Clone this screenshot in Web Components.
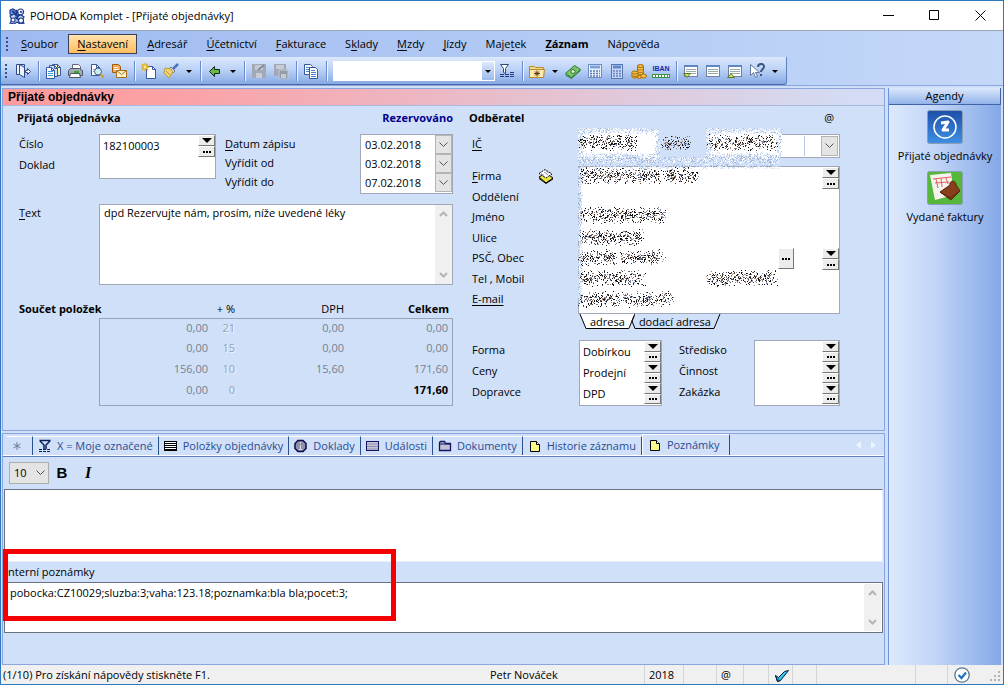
<!DOCTYPE html>
<html lang="cs">
<head>
<meta charset="utf-8">
<title>POHODA Komplet - [Přijaté objednávky]</title>
<style>
html,body{margin:0;height:100%}
body{font:11px/16px "Open Sans","Noto Sans",sans-serif;color:#000;overflow:hidden}
pohoda-window{height:100vh}
</style>
</head>
<body>
<pohoda-window></pohoda-window>
<script>
const BASE = `*{box-sizing:border-box}button,input,textarea,select{font:inherit;color:inherit;margin:0;padding:0;border:0;border-radius:0;background:none;min-width:0;outline:0}button{display:block}a{color:inherit;text-decoration:none}u{text-underline-offset:2px}h1,h2,p{margin:0;font:inherit}svg{display:block}`;
function define(name, html, setup){
  const t = document.createElement('template');
  t.innerHTML = html.replace('<style>', '<style>' + BASE);
  customElements.define(name, class extends HTMLElement{
    connectedCallback(){
      if(this.shadowRoot) return;
      this.attachShadow({mode:'open'}).append(t.content.cloneNode(true));
      if(setup) setup(this, this.shadowRoot);
    }
  });
}

const page = (x,y,f='#fff',s='#36589c') => `<path d="M${x} ${y}h5l3 3v8h-8z" fill="${f}" stroke="${s}"/><path d="M${x+5} ${y}v3h3" fill="none" stroke="${s}"/>`;
const listIcon = `<rect x="1.500" y="2.500" width="13" height="11" fill="#fff" stroke="#6f7f9c"/><path d="M1 3h14" stroke="#5f86c4" stroke-width="2"/><path d="M3 6.500h10M3 8.500h10M3 10.500h10" stroke="#9aa"/>`;
const ICONS = {
  logo:`<g fill="#fff" stroke="#1d3c8f" stroke-width="1.200"><path d="M1 2l3-1 3 2 1 3-3 2-4-2z" fill="#7f9be0"/><circle cx="11.500" cy="4" r="3"/><path d="M1 8l4-2 3 2 4-1 3 2-2 3 2 3-4 1-3-2-3 2-4-1 2-3z" fill="#c3d2f6"/><circle cx="12" cy="12.500" r="2.500"/><circle cx="4" cy="12" r="2"/></g><path d="M3 3l5 4M6 9l4 3M10 6l-2 4M11 3.500l2 1M7 2l2 3" stroke="#1d3c8f" stroke-width="1.800"/>`,
  exit:`<path d="M1.500 1.500h3v10h-3zM4.500 1.500l5 3v10l-5-3z" fill="#eef3fd" stroke="#2d4a86"/><path d="M4.500 1.500h5v3" stroke="#2d4a86" fill="none"/><path d="M10.500 7.500h2v-2l3 3-3 3v-2h-2z" fill="#fff" stroke="#2d4a86"/>`,
  pages:page(7.500,1.500,'#fff6a8')+page(4.500,2.500,'#cfe0ff')+page(1.500,4.500)+`<path d="M3 8.500h5M3 10.500h5M3 12.500h5" stroke="#3f9ad0"/>`,
  print:`<path d="M5.500 7V1.500h6l2 2V7z" fill="#fff" stroke="#667"/><path d="M1.500 7.500l2-2h9l3 2v5h-14z" fill="#a4abb5" stroke="#4e5764"/><path d="M3.500 10.500h9l1 4h-11z" fill="#fff" stroke="#4e5764"/><path d="M7 9h5" stroke="#38a53a" stroke-width="2"/>`,
  preview:page(2.500,1.500)+`<path d="M4 6.500h4M4 8.500h3" stroke="#9ab"/><circle cx="9" cy="8.500" r="3.500" fill="#cdeaf7" stroke="#44618c"/><path d="M11.500 11l3 3.500" stroke="#d29a2a" stroke-width="2"/>`,
  mail:`<path d="M1.500 1.500h6l2 2v6h-8z" fill="#f5a94e" stroke="#a05a10"/><path d="M3 4.500h4M3 6.500h5" stroke="#fff"/><path d="M5.500 7.500h10v7h-10z" fill="#fff3cc" stroke="#a8701c"/><path d="M5.500 7.500l5 4 5-4" fill="none" stroke="#a8701c"/>`,
  new:`<path d="M5.500 3.500h6l3 3v9h-9z" fill="#fff" stroke="#36589c"/><path d="M11.500 3.500v3h3" fill="none" stroke="#36589c"/><path d="M4 0v8M0 4h8M1 1l6 6M7 1l-6 6" stroke="#e9a90c" stroke-width="1.300"/><circle cx="4" cy="4" r="1.500" fill="#fff2a0"/>`,
  brush:`<path d="M15 1l-5 5" stroke="#4a74c0" stroke-width="2.500"/><path d="M8 4l4 4-2 2-4-4z" fill="#dfe3ea" stroke="#778"/><path d="M2 5l6 1 2 3-4 6-5-5z" fill="#f1d070" stroke="#b59a40"/><path d="M3 8l4 4" stroke="#b59a40"/>`,
  back:`<path d="M2.500 8.500l5-5v3h5v4h-5v3z" fill="#68b848" stroke="#102a10"/>`,
  save:`<path d="M1 1h14v14H1z" fill="#a2a8b4"/><path d="M4 2h8v5H4zM5 10h6v5H5z" fill="#c6ccd5"/><path d="M7 7l6-5" stroke="#868d9a" stroke-width="2"/>`,
  saveAll:`<path d="M1 1h12v12H1z" fill="#a2a8b4"/><path d="M3 2h8v4H3z" fill="#c6ccd5"/><path d="M6 7h9v9H6z" fill="#959ba8" stroke="#c6ccd5"/><path d="M8 11h5v4H8z" fill="#c6ccd5"/>`,
  copy:`<path d="M1.500 1.500h6l2 2v8h-8z" fill="#fff" stroke="#36589c"/><path d="M3 4.500h4M3 6.500h5M3 8.500h5" stroke="#4a83c8"/><path d="M6.500 4.500h6l2 2v9h-8z" fill="#fff" stroke="#36589c"/><path d="M8 7.500h4M8 9.500h5M8 11.500h5M8 13.500h5" stroke="#4a83c8"/>`,
  filter:`<path d="M1.500 1.500h8l-3 4v5l-2-1v-4z" fill="#fff" stroke="#2c4a7c"/><path d="M1 11.500h4M6 11.500h4M11 11.500h4M1 13.500h4M6 13.500h4M11 13.500h4M11 9.500h4" stroke="#1e3d80"/>`,
  folder:`<path d="M.5 3.500h5l1 1h8v10h-14z" fill="#f7dc8c" stroke="#b8862c"/><path d="M.5 6.500h15l-1 8h-14z" fill="#ffeaad" stroke="#b8862c"/><path d="M8 7.500v6M5 10.500h6M6 8.500l4 4M10 8.500l-4 4" stroke="#5b3410"/>`,
  money:`<path d="M.5 10.500l9-8 6 4-9 8z" fill="#7cc46c" stroke="#2b7a2b"/><path d="M.5 12l6 3.500 9-8" fill="none" stroke="#2b7a2b"/><circle cx="8" cy="8.500" r="2" fill="#e5f6dc" stroke="#2b7a2b"/>`,
  calcWide:`<rect x="1.500" y="1.500" width="13" height="13" fill="#eaf1fd" stroke="#6d8cc2"/><path d="M3 4h10" stroke="#7fa2dc" stroke-width="3"/><path d="M3 8h10M3 10.500h10M3 13h10" stroke="#5878b4" stroke-width="1.500" stroke-dasharray="2 1"/>`,
  calc:`<rect x="2.500" y="1.500" width="11" height="14" fill="#c4d7f6" stroke="#5675ad"/><path d="M4 4h8" stroke="#5f86c8" stroke-width="3"/><path d="M4 8h8M4 10.500h8M4 13h8" stroke="#6483bb" stroke-width="1.500" stroke-dasharray="2 1"/>`,
  coins:`<g fill="#f6c044" stroke="#a86b08"><path d="M6.500 3v7c0 2 6 2 6 0V3z"/><ellipse cx="9.500" cy="3" rx="3" ry="1.500"/><path d="M6.500 5.500c0 2 6 2 6 0M6.500 8c0 2 6 2 6 0"/><path d="M1 9.500v4c0 2 6 2 6 0v-4z"/><ellipse cx="4" cy="9.500" rx="3" ry="1.500"/><path d="M1 12c0 2 6 2 6 0"/><ellipse cx="12.500" cy="13" rx="3" ry="2"/><ellipse cx="8.500" cy="14" rx="2" ry="1.500"/></g>`,
  listDown:listIcon+`<path d="M.5 10.500h7l-3.500 4z" fill="#c9e06a" stroke="#5b7a20"/>`,
  list:listIcon,
  listUp:listIcon+`<path d="M.5 14.500h7l-3.500-4z" fill="#c9e06a" stroke="#5b7a20"/>`,
  help:`<path d="M1.500 1.500v11l3-3 2 5 2-1-2-4h4z" fill="#fff" stroke="#667a9c"/><path d="M9 4c0-4 6-4 6-.5 0 3-3 2.500-3 5.500M12 11v2" fill="none" stroke="#34577e" stroke-width="2"/>`,
  cards:`<path d="M1 9l7-4 7 5-7 5z" fill="#e9e43a" stroke="#000"/><path d="M1 10.500l7 5 7-4.500" fill="none" stroke="#000"/><path d="M1 5.500l6-4 7 4.500-6 4z" fill="#fff" stroke="#000" stroke-dasharray="2 1"/><path d="M3 5.500l3 2M6 4l4 3M8 3l3 2" stroke="#88a"/>`,
  star:`<path d="M8 4v8M4.500 6l7 4M11.500 6l-7 4" stroke="#6e7c98"/>`,
  tabFilter:`<path d="M2.500 2.500h11M3 3l4 4v4M13 3L9 7v4" fill="none" stroke="#0b1f5c" stroke-width="1.500"/><path d="M2 11.500h12M2 13.500h12" stroke="#0b1f5c" stroke-dasharray="3 1"/>`,
  rows:`<rect x="1.500" y="3.500" width="12" height="9" fill="#fff" stroke="#000"/><path d="M2 5.500h12M2 7.500h12M2 9.500h12M2 11.500h12" stroke="#000"/>`,
  info:`<path d="M5 2.500h5l3 3v5l-3 3H5l-3-3v-5z" fill="#8e91a8" stroke="#0a0a50" stroke-width="1.500"/><path d="M7.500 4v1.500M7.500 7v5M6 11.500h3" stroke="#dde"/>`,
  events:`<rect x="1.500" y="3.500" width="12" height="9" fill="#c8c8d8" stroke="#141460"/><path d="M2 6h11M2 8.500h11M2 11h11" stroke="#8c8cac"/>`,
  docs:`<path d="M2.500 12.500v-8l1-1h4l1 2h5v7z" fill="#c0c0d4" stroke="#141460" stroke-width="1.300"/><path d="M3 6h10" stroke="#141460"/>`,
  note:`<path d="M3.500 3.500h6l3 3v7h-9z" fill="#fdf98a" stroke="#000"/><path d="M9.500 3.500v3h3" fill="#fff" stroke="#000"/>`,
  sync:`<path d="M2.500 8.500l3 2 6-6 4-1-8 10-3 1z" fill="#36c4ea" stroke="#00203c"/><path d="M2.500 8.500l2 6 3-1" fill="#1884b8" stroke="#00203c"/>`,
  ok:`<circle cx="8" cy="8" r="7.200" fill="#fff" stroke="#5b7690" stroke-width="1.300"/><path d="M4.500 8l3 3 4.500-5.500" fill="none" stroke="#1e6fc4" stroke-width="2.200"/>`
};
define('px-icon','<style>:host{display:block;width:16px;height:16px;flex:none}svg{width:100%;height:100%}</style><svg viewBox="0 0 16 16" aria-hidden="true"></svg>',
  (h,r)=>{r.querySelector('svg').innerHTML = ICONS[h.getAttribute('name')] || '';});

define('title-bar',`<style>
:host{display:flex;align-items:center;height:30px;padding-left:8px;background:#fff;border-bottom:1px solid #9aa6b4}
h1{flex:1;margin-left:5px}
button{width:46px;height:30px;display:grid;place-items:center}
</style><px-icon name="logo"></px-icon><h1><slot></slot></h1>
<button aria-label="Minimalizovat"><svg width="11" height="11"><path d="M0 5.500h11" stroke="#000"/></svg></button>
<button aria-label="Maximalizovat"><svg width="11" height="11"><path d="M.5 .5h9v9h-9z" fill="none" stroke="#000"/></svg></button>
<button aria-label="Zavřít"><svg width="11" height="11"><path d="M.5 .5l10 10M10.500 .5l-10 10" stroke="#000"/></svg></button>`);

define('menu-bar',`<style>
:host{display:flex;align-items:center;height:26px;padding-left:5px}
nav{display:flex;gap:1px}
i{width:2px;height:15px;margin-right:4px;background:repeating-linear-gradient(#33518f 0 2px,transparent 2px 4px)}
a{height:20px;line-height:18px;padding:0 8px;border:1px solid transparent}
a.on{border-color:#3a3f58;background:linear-gradient(#ffe3ae,#ffbe5e)}
b{font-weight:700}
</style><i></i><nav><a href="#"><u>S</u>oubor</a><a href="#" class="on"><u>N</u>astavení</a><a href="#"><u>A</u>dresář</a><a href="#"><u>Ú</u>četnictví</a><a href="#"><u>F</u>akturace</a><a href="#">S<u>k</u>lady</a><a href="#"><u>M</u>zdy</a><a href="#"><u>J</u>ízdy</a><a href="#">Maje<u>t</u>ek</a><a href="#"><b><u>Z</u>áznam</b></a><a href="#">Náp<u>o</u>věda</a></nav>`);

define('tool-bar',`<style>
:host{display:flex;width:fit-content;align-items:center;height:28px;padding:1px 4px 0;background:linear-gradient(#dce8fc,#bdd3f7 45%,#86a9e4);border-bottom:1px solid #4868a8;border-right:1px solid #5d80c0;border-radius:0 0 3px 0}
.grip{width:2px;height:15px;margin-right:5px;background:repeating-linear-gradient(#33518f 0 2px,transparent 2px 4px)}
button{width:22px;height:22px;display:grid;place-items:center}
button.m{width:14px}
.m::before,.drop::before{content:"";border:3px solid transparent;border-top-color:#000;border-bottom:0}
hr{width:1px;height:20px;margin:0 3px 0 4px;border:0;background:#6a8ccb;box-shadow:1px 0 #eef4ff}
.combo{display:flex;height:20px;width:162px;background:#fff;margin-left:3px;margin-right:1px}
.combo input{flex:1;padding:0 3px}
.combo button{width:14px;height:20px;background:linear-gradient(#dce8fc,#9ebbec);border:1px solid #fff}
.iban{font:bold 7px/8px "Liberation Sans",sans-serif;color:#1a28b0}
.iban span{display:block;height:4px;margin-top:1px;border:1px solid #3d9440;background:repeating-linear-gradient(90deg,#fff 0 2px,#3d9440 2px 3px)}
</style><span class="grip"></span>
<button aria-label="Konec"><px-icon name="exit"></px-icon></button><hr>
<button aria-label="Agendy"><px-icon name="pages"></px-icon></button><button aria-label="Tisk"><px-icon name="print"></px-icon></button><button aria-label="Náhled"><px-icon name="preview"></px-icon></button><button aria-label="Odeslat"><px-icon name="mail"></px-icon></button><hr>
<button aria-label="Nový"><px-icon name="new"></px-icon></button><button aria-label="Formát"><px-icon name="brush"></px-icon></button><button class="m" aria-label="Více"></button><hr>
<button aria-label="Zpět"><px-icon name="back"></px-icon></button><button class="m" aria-label="Více"></button><hr>
<button aria-label="Uložit" disabled><px-icon name="save"></px-icon></button><button aria-label="Uložit vše" disabled><px-icon name="saveAll"></px-icon></button><hr>
<button aria-label="Kopírovat"><px-icon name="copy"></px-icon></button><hr>
<div class="combo"><input aria-label="Hledat"><button class="drop" aria-label="Rozbalit"></button></div>
<button aria-label="Filtr"><px-icon name="filter"></px-icon></button><hr>
<button aria-label="Oblíbené"><px-icon name="folder"></px-icon></button><button class="m" aria-label="Více"></button>
<button aria-label="Platby"><px-icon name="money"></px-icon></button><button aria-label="Kalkulátor"><px-icon name="calcWide"></px-icon></button><button aria-label="Kalkulačka"><px-icon name="calc"></px-icon></button><button aria-label="Měny"><px-icon name="coins"></px-icon></button><button class="iban"><div>IBAN<span></span></div></button><hr>
<button aria-label="Seznam dole"><px-icon name="listDown"></px-icon></button><button aria-label="Seznam"><px-icon name="list"></px-icon></button><button aria-label="Seznam nahoře"><px-icon name="listUp"></px-icon></button><button aria-label="Nápověda"><px-icon name="help"></px-icon></button><button class="m" aria-label="Více"></button>`);

define('pick-buttons',`<style>
:host{display:flex;flex-direction:column;width:17px;flex:none}
button{flex:1;display:grid;place-items:center;background:#ececec;border:1px solid;border-color:#fff #777 #777 #fff}
</style><button aria-label="Rozbalit"><svg width="10" height="5"><path d="M0 0h10l-5 5z"/></svg></button><button aria-label="Vybrat"><svg width="8" height="2"><path d="M0 0h2v2h-2zM3 0h2v2h-2zM6 0h2v2h-2z"/></svg></button>`);

define('scroll-strip',`<style>
:host{display:flex;flex-direction:column;justify-content:space-between;align-items:center;width:17px;padding:6px 0;background:#f0f0f0;flex:none;box-sizing:border-box}
svg{fill:none;stroke:#b4b4b4;stroke-width:2}
</style><svg width="9" height="6"><path d="M1 5l3.500-3.500L8 5"/></svg><svg width="9" height="6"><path d="M1 1l3.500 3.500L8 1"/></svg>`);

/* Speckled cover over the customer's personal data */
define('redaction-layer',`<style>:host{display:block;pointer-events:none}svg{overflow:visible}</style><svg width="1" height="1" shape-rendering="crispEdges" aria-hidden="true"></svg>`,(h,r)=>{
  let s = 9127;
  const rnd = () => {s = (s + 0x6D2B79F5) | 0; let t = Math.imul(s ^ s >>> 15, 1 | s); t = t + Math.imul(t ^ t >>> 7, 61 | t) ^ t; return ((t ^ t >>> 14) >>> 0) / 4294967296};
  const groups = [];
  const fill = (x0,y0,w,hh,c,f) => {const d=[];for(let y=0;y<hh;y++)for(let x=0;x<w;x++)if(rnd()<f(x,y))d.push(`M${x0+x} ${y0+y}h1v1h-1z`);groups.push(`<path fill="${c}" d="${d.join('')}"/>`)};
  const blob = (x,y,w,hh) => {
    fill(x,y,w,hh,'#ffffff',(a,b)=>{const e=Math.min(a,b,w-1-a,hh-1-b);return e>6?1:.25+e*.11});
    fill(x,y,w,hh,'#a9bbd8',(a,b)=>Math.min(a,b,w-1-a,hh-1-b)<5?.12:0)};
  fill(127,5,76,30,'#d0e0f8',()=>1);
  blob(0,2,82,31); blob(128,2,76,31);
  fill(0,32,202,7,'#ffffff',()=>.25);
  fill(0,31,202,9,'#a9bbd8',()=>.2);
  fill(0,37,202,6,'#d0e0f8',(x,y)=>.7-y*.1);
  fill(0,40,5,136,'#d0e0f8',(x)=>.75-x*.14);
  fill(0,40,4,136,'#a9bbd8',()=>.15);
  const word = (x,y,w) => ['#111111','#4a4646','#7d8aa6','#a08070'].forEach((c,i)=>fill(x-3,y-9,w+6,19,c,(a,b)=>{
    const d=Math.min(1,Math.abs(b-9)/9), e=Math.min(1,(a+1)/6,(w+6-a)/6), g=Math.sin((x+a)*1.3+b)>-.3?1:.45; return (i?.08:.17)*Math.pow(1-d,1.1)*e*g*1.9}));
  [[3,16,53],[86,17,24],[132,16,66],[3,49,80],[88,49,30],[3,89,38],[42,89,44],[3,111,60],[3,131,34],[43,131,42],[3,152,62],[131,152,66],[3,173,38],[46,173,48]].forEach(a=>word(...a));
  r.querySelector('svg').innerHTML = groups.join('');
});

define('order-form',`<style>
:host{display:block;border:1px solid #8ba6de;background:#d0e0f8}
header{height:17px;line-height:16px;padding-left:5px;font-weight:700;background:linear-gradient(90deg,#ff9a9c,#fba2a6 20%,#d3dcf4 96%);border-bottom:1px solid #aab8e0;font-family:"Liberation Sans",sans-serif;font-size:12px}
.cols{display:grid;grid-template-columns:minmax(0,436fr) minmax(0,371fr);gap:16px;padding:3px 44px 24px 14px}
.head{display:flex;justify-content:space-between;height:18px;line-height:18px;margin-bottom:7px}
h2{font-weight:700}
.state{font-weight:700;color:#00008c}
.box{background:#fff;border:1px solid #a0a8b8}
.top{display:grid;grid-template-columns:80px 117px 1fr 93px;align-items:start;padding-left:2px}
.top label{display:block;line-height:19px;height:21px}
.top .dates label{height:19px;line-height:19px}
.dates{padding-left:9px}
.num{height:45px;display:flex;justify-content:space-between}
.num div{flex:1}
.num input{display:block;width:100%;height:20px;padding-left:3px}
.num pick-buttons{height:22px}
.d{display:flex;height:19px}
.db{height:60px}
.d input{flex:1;padding-left:4px;height:18px}
.dd{width:17px;background:#e4e4e4;border:1px solid #b4b4b4;display:grid;place-items:center;flex:none}
.dd svg{fill:none;stroke:#555}
.text{display:grid;grid-template-columns:80px 1fr;padding-left:2px;margin-top:10px}
.text label{line-height:18px}
.text .box{height:81px;display:flex}
textarea{flex:1;resize:none;padding:0 4px;line-height:16px;display:block;overflow:hidden}
table{width:100%;border-spacing:0;margin-top:14px;table-layout:fixed}
th{padding:0;height:19px;text-align:right;font-weight:400}
th.l{text-align:left;padding-left:2px}
.b{font-weight:700;color:#000}
td{padding:0;height:21px;line-height:18px;vertical-align:top;text-align:right;color:#75808f}
td.p{color:#94a1b5;text-shadow:1px 1px #eef4ff}
td:nth-child(2){border-left:1px solid #98a4bb}
td:last-child,th:last-child{padding-right:4px}
td:last-child{border-right:1px solid #98a4bb}
tbody tr:first-child td:not(:first-child){border-top:1px solid #98a4bb}
tbody tr:last-child td{height:25px}
tbody tr:last-child td:not(:first-child){border-bottom:1px solid #98a4bb}
.party{position:relative;display:grid;grid-template-columns:106px minmax(0,1fr);padding-left:3px}
.ic{height:24px;display:flex}
.ic>input{width:128px;flex:none}
.ic .box{flex:1;min-width:0;display:flex;padding:1px}
.ic .box input{flex:1}
.ic .box input+input{flex:none;width:17px;border-left:1px solid #b8c8e4}
.names{margin-top:8px;height:148px;display:grid;grid-template-rows:repeat(7,1fr);padding-bottom:4px;position:relative}
.names label{line-height:20px;height:20px}
.names px-icon{position:absolute;left:66px;top:2px}
.ic0{line-height:20px}
.addr{margin-top:8px;height:148px;display:grid;grid-template-rows:repeat(7,1fr);padding:0 0 3px}
.addr div{display:flex;justify-content:flex-end}
.addr input{flex:1;padding-left:4px}
.addr pick-buttons{height:22px}
.dots{width:16px;height:21px;background:#ececec;border:1px solid;border-color:#fff #777 #777 #fff;margin-right:28px;display:grid;place-items:center}
redaction-layer{position:absolute;left:109px;top:-8px}
.at{display:flex;height:15px;margin-left:109px}
.at button{position:relative;height:15px;line-height:14px;padding:0 10px 0 12px}
.at button+button{margin-left:-6px;padding:0 10px}
.at svg{position:absolute;inset:0;width:100%;height:15px}
.at span{position:relative}
.sel{display:grid;grid-template-columns:107px 83px 1fr 86px;padding-left:3px;margin-top:11px}
.sel label{display:block;height:21px;line-height:20px}
.sel .c{padding-left:17px}
.sel .box{height:66px}
.sel .box div{display:flex;height:21px}
.sel .box input{flex:1;padding-left:3px}
</style>
<header><slot></slot></header>
<div class="cols"><section>
<div class="head"><h2>Přijatá objednávka</h2><span class="state">Rezervováno</span></div>
<div class="top"><div><label for="n">Číslo</label><label for="dk">Doklad</label></div>
<div class="box num"><div><input id="n" value="182100003"><input id="dk"></div><pick-buttons></pick-buttons></div>
<div class="dates"><label for="d1"><u>D</u>atum zápisu</label><label for="d2">Vyřídit od</label><label for="d3">Vyřídit do</label></div>
<div class="box db"><div class="d"><input id="d1" value="03.02.2018"><button class="dd" aria-label="Kalendář"><svg width="9" height="6"><path d="M.5 .5l4 4 4-4"/></svg></button></div><div class="d"><input id="d2" value="03.02.2018"><button class="dd" aria-label="Kalendář"><svg width="9" height="6"><path d="M.5 .5l4 4 4-4"/></svg></button></div><div class="d"><input id="d3" value="07.02.2018"><button class="dd" aria-label="Kalendář"><svg width="9" height="6"><path d="M.5 .5l4 4 4-4"/></svg></button></div></div></div>
<div class="text"><label for="t"><u>T</u>ext</label><div class="box"><textarea id="t">dpd Rezervujte nám, prosím, níže uvedené léky</textarea><scroll-strip></scroll-strip></div></div>
<table><colgroup><col style="width:82px"><col><col style="width:27px"><col><col></colgroup>
<thead><tr><th class="l b" colspan="2">Součet položek</th><th>+ %</th><th>DPH</th><th class="b">Celkem</th></tr></thead>
<tbody><tr><td></td><td>0,00</td><td class="p">21</td><td>0,00</td><td>0,00</td></tr><tr><td></td><td>0,00</td><td class="p">15</td><td>0,00</td><td>0,00</td></tr><tr><td></td><td>156,00</td><td class="p">10</td><td>15,60</td><td>171,60</td></tr><tr><td></td><td>0,00</td><td class="p">0</td><td></td><td class="b">171,60</td></tr></tbody></table>
</section><section>
<div class="head"><h2>Odběratel</h2><a href="#" style="margin-right:6px">@</a></div>
<div class="party"><label class="ic0" for="ic"><u>IČ</u></label>
<div class="ic"><input id="ic"><div class="box"><input aria-label="DIČ"><input aria-label="Kód"><button class="dd" aria-label="Rozbalit"><svg width="9" height="6"><path d="M.5 .5l4 4 4-4"/></svg></button></div></div>
<div class="names"><label for="a1"><u>F</u>irma</label><label for="a2">Oddělení</label><label for="a3">Jméno</label><label for="a4">Ulice</label><label for="a5">PSČ, Obec</label><label for="a6">Tel , Mobil</label><label for="a7"><u>E-mail</u></label><px-icon name="cards"></px-icon></div>
<div class="box addr"><div><input id="a1"><pick-buttons></pick-buttons></div><div><input id="a2"></div><div><input id="a3"></div><div><input id="a4"></div><div><input id="a5"><button class="dots" aria-label="Vybrat"><svg width="8" height="2"><path d="M0 0h2v2h-2zM3 0h2v2h-2zM6 0h2v2h-2z"/></svg></button><pick-buttons></pick-buttons></div><div><input id="a6"></div><div><input id="a7"></div></div>
<redaction-layer></redaction-layer></div>
<div class="at"><button><svg viewBox="0 0 57 15" preserveAspectRatio="none"><path d="M2 0l6 14.500h43l6-14.500" fill="#fff" stroke="#000"/></svg><span>adresa</span></button><button><svg viewBox="0 0 92 15" preserveAspectRatio="none"><path d="M5 2l-2 5 3 7.500h79l6-14.500" fill="none" stroke="#000"/></svg><span>dodací adresa</span></button></div>
<div class="sel"><div><label for="s1">Forma</label><label for="s2">Ceny</label><label for="s3">Dopravce</label></div>
<div class="box"><div><input id="s1" value="Dobírkou"><pick-buttons></pick-buttons></div><div><input id="s2" value="Prodejní"><pick-buttons></pick-buttons></div><div><input id="s3" value="DPD"><pick-buttons></pick-buttons></div></div>
<div class="c"><label for="s4">Středisko</label><label for="s5">Činnost</label><label for="s6">Zakázka</label></div>
<div class="box"><div><input id="s4"><pick-buttons></pick-buttons></div><div><input id="s5"><pick-buttons></pick-buttons></div><div><input id="s6"><pick-buttons></pick-buttons></div></div></div>
</section></div>`);

define('record-tab',`<style>
:host{display:block}
button{display:flex;align-items:center;gap:4px;height:19px;padding:0 5px 0 4px;border-top:1px solid #fff;border-right:1px solid #29508f;color:#2a4c92;white-space:nowrap}
:host([icon="star"]) button{gap:0;padding:0 7px 0 2px}
:host([active]) button{height:21px;padding:0 9px 0 4px;background:#d0e0f8;border-left:1px solid #fff}
</style><button><px-icon></px-icon><span><slot></slot></span></button>`,
(h,r)=>{const i=r.querySelector('px-icon');const n=document.createElement('px-icon');n.setAttribute('name',h.getAttribute('icon'));i.replaceWith(n);});

define('notes-panel',`<style>
:host{display:flex;flex-direction:column;border:1px solid #8ba6de;background:#d0e0f8;position:relative}
.tabs{display:flex;align-items:flex-end;height:23px;padding:0 8px 1px 4px;border-bottom:1px solid #5f7fc4;box-shadow:inset 0 -1px #fff}
.nav{margin-left:auto;display:flex;gap:10px;align-self:center}
.bar{display:flex;align-items:center;height:32px;padding-left:6px}
.size{position:relative;width:40px;height:22px}
select{appearance:none;width:100%;height:100%;background:#e4e4e4;border:1px solid #adadad;padding-left:4px}
.size svg{position:absolute;right:4px;top:8px;fill:none;stroke:#555;pointer-events:none}
.bar button{width:26px;font:bold 15px/22px "Liberation Sans",sans-serif}
.bar button+button{font:italic bold 16px/22px "Liberation Serif",serif}
.area{display:flex;background:#fff;border:1px solid #6a7282;margin:0 1px}
.a1{flex:1;border-color:#6a7282 #e8eef8 #e8eef8 #6a7282}
.a2{height:51px;margin-bottom:31px;padding:1px}
textarea{flex:1;resize:none;line-height:18px;padding:0 4px}
label{height:20px;line-height:20px;padding-left:2px}
.mark{position:absolute;left:0;bottom:43px;width:393px;height:72px;border:5px solid #f40000;pointer-events:none}
</style>
<div class="tabs"><record-tab icon="star"></record-tab><record-tab icon="tabFilter">X = Moje označené</record-tab><record-tab icon="rows">Položky objednávky</record-tab><record-tab icon="info">Doklady</record-tab><record-tab icon="events">Události</record-tab><record-tab icon="docs">Dokumenty</record-tab><record-tab icon="note">Historie záznamu</record-tab><record-tab icon="note" active>Poznámky</record-tab>
<div class="nav"><svg width="5" height="8"><path d="M5 0v8L0 4z" fill="#eef4ff"/></svg><svg width="5" height="8"><path d="M0 0v8l5-4z" fill="#eef4ff"/></svg></div></div>
<div class="bar"><div class="size"><select aria-label="Velikost písma"><option>10</option></select><svg width="9" height="6"><path d="M.5 .5l4 4 4-4"/></svg></div><button>B</button><button>I</button></div>
<div class="area a1"><textarea aria-label="Poznámky"></textarea></div>
<label for="i">Interní poznámky</label>
<div class="area a2"><textarea id="i">pobocka:CZ10029;sluzba:3;vaha:123.18;poznamka:bla bla;pocet:3;</textarea><scroll-strip></scroll-strip></div>
<div class="mark"></div>`);

define('agenda-bar',`<style>
:host{display:flex;flex-direction:column;border-left:1px solid #6f92d8;background:linear-gradient(90deg,#dce8fc,#c2d6f8 40%,#84a8e6)}
h2{height:17px;line-height:16px;text-align:center;background:linear-gradient(#dbe8fc,#93b3ea);border:1px solid #3f62a8;border-width:0 1px 1px 0}
a{display:flex;flex-direction:column;align-items:center;line-height:18px;margin-top:5px;white-space:nowrap;gap:3px}
a+a{margin-top:6px}
</style><h2>Agendy</h2>
<a href="#"><svg width="36" height="34"><defs><linearGradient id="b" x2="0" y2="1"><stop stop-color="#1d4fa8"/><stop offset="1" stop-color="#3f90e4"/></linearGradient></defs><rect x=".5" y=".5" width="35" height="33" rx="2" fill="url(#b)" stroke="#8d9db8"/><circle cx="18" cy="17" r="11" fill="none" stroke="#fff" stroke-width="1.500"/><path d="M14 13l7-1-5 8h6" fill="none" stroke="#fff" stroke-width="3" stroke-linejoin="round"/></svg>Přijaté objednávky</a>
<a href="#"><svg width="36" height="34"><rect x=".5" y=".5" width="35" height="33" rx="2" fill="#55b83c" stroke="#8d9db8"/><path d="M3 4l21-2 3 22-19 5z" fill="#f6f3ee"/><path d="M6 8l18-2M8 12l14-1M9 8l2 9M14 7l1 9M19 7l2 6" stroke="#e06060" fill="none"/><path d="M13 21l10-7c-1-5 6-5 6 0l4 6-9 9z" fill="#8a3f1c" stroke="#5a240c"/><path d="M13 21l10 6 10-7" fill="none" stroke="#5a240c"/></svg>Vydané faktury</a>`);

define('status-bar',`<style>
:host{display:flex;height:19px;line-height:20px;background:#f0f0f0;padding-left:2px}
span{display:flex;align-items:center;justify-content:center;border-left:1px solid #d4d4d4;flex:none}
.h{flex:1;border:0;justify-content:flex-start}
.g{flex:none;align-self:flex-end;margin:0 2px 2px 15px}
</style><span class="h">(1/10) Pro získání nápovědy stiskněte F1.</span><span style="width:154px;border:0;justify-content:flex-start">Petr Nováček</span><span style="width:39px;justify-content:flex-start;padding-left:4px">2018</span><span style="width:33px"></span><span style="width:27px;padding-left:4px;justify-content:flex-start">@</span><span style="width:25px"></span><span style="width:24px"><px-icon name="sync"></px-icon></span><span style="width:24px"></span><span style="width:99px"></span><span style="width:32px"></span><span style="width:28px"><px-icon name="ok"></px-icon></span><svg class="g" width="11" height="11" fill="#b4b4b4"><path d="M8 0h2v2H8zM8 4h2v2H8zM8 8h2v2H8zM4 4h2v2H4zM4 8h2v2H4zM0 8h2v2H0z"/></svg>`);

define('pohoda-window',`<style>
:host{display:flex;flex-direction:column;box-sizing:border-box;border:1px solid #2f78c0;background:linear-gradient(90deg,#9ebaf0,#c4d8f8)}
main{flex:1;min-height:0;display:grid;grid-template-columns:1fr 113px;gap:3px;padding:2px 2px 0 1px;background:#d0e0f8;border-top:1px solid #8ba6de}
.l{display:flex;flex-direction:column;gap:2px;min-width:0}
notes-panel{flex:1}
</style><title-bar>POHODA Komplet - [Přijaté objednávky]</title-bar><menu-bar></menu-bar><tool-bar></tool-bar>
<main><div class="l"><order-form>Přijaté objednávky</order-form><notes-panel></notes-panel></div><agenda-bar></agenda-bar></main><status-bar></status-bar>`);
</script>
</body>
</html>
